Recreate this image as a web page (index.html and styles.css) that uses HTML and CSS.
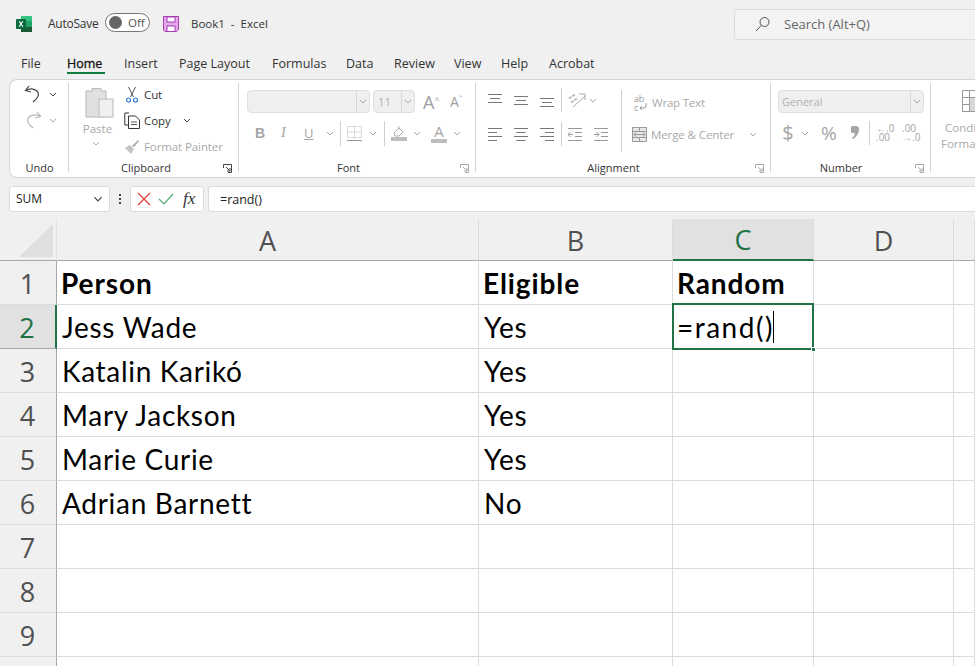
FILE: index.html
```html
<!DOCTYPE html>
<html lang="en">
<head>
<meta charset="utf-8">
<title>Book1 - Excel</title>
<link rel="stylesheet" href="styles.css">
</head>
<body>
<svg class="defs" width="0" height="0">
  <symbol id="chev" viewBox="0 0 8 5"><path d="M1 1l3 3 3-3" fill="none" stroke="currentColor" stroke-width="1"/></symbol>
  <symbol id="launch" viewBox="0 0 9 9"><path d="M.5 4V.5h8v8H5M3 3l4 4M7 4v3H4" fill="none" stroke="currentColor"/></symbol>
</svg>

<header class="titlebar">
  <svg class="xl" width="16" height="16" viewBox="0 0 16 16"><rect x="5" width="11" height="16" rx="1" fill="#107c41"/><rect x="5" width="11" height="5" fill="#33c481"/><rect x="10" y="5" width="6" height="6" fill="#21a366"/><rect x="5" y="11" width="11" height="5" fill="#185c37"/><rect y="3" width="10" height="10" rx="1" fill="#0b6a3b"/><path d="M2.6 5.2h1.3l1.1 1.9 1.1-1.9h1.3L5.7 8l1.8 2.8H6.200L5 8.800 3.800 10.800H2.500L4.300 8z" fill="#fff"/></svg>
  <span class="autosave">AutoSave</span>
  <span class="toggle"><i class="knob"></i><b>Off</b></span>
  <svg class="save" width="16" height="16" viewBox="0 0 16 16"><path d="M.5.500h15v13l-2 2H2l-1.500-1.500z" fill="#e3a9e8" stroke="#a63bb4"/><rect x="4" y="1" width="8" height="5" fill="#fff" stroke="#a63bb4"/><rect x="4" y="10" width="8" height="5.500" fill="#fff" stroke="#a63bb4"/></svg>
  <span class="doc">Book1&nbsp; -&nbsp; Excel</span>
  <div class="search">
    <svg width="16" height="16" viewBox="0 0 16 16"><circle cx="9.500" cy="6" r="4.500" fill="none" stroke="#555"/><path d="M6.300 9.300L1 15" stroke="#555" fill="none"/></svg>
    <span>Search (Alt+Q)</span>
  </div>
</header>

<nav class="tabs">
  <a class="t-file">File</a>
  <a class="t-home active">Home</a>
  <a class="t-insert">Insert</a>
  <a class="t-layout">Page Layout</a>
  <a class="t-formulas">Formulas</a>
  <a class="t-data">Data</a>
  <a class="t-review">Review</a>
  <a class="t-view">View</a>
  <a class="t-help">Help</a>
  <a class="t-acrobat">Acrobat</a>
</nav>

<section class="ribbon">
  <div class="group g-undo">
    <div class="body undo-body">
      <div class="irow">
        <svg class="ic-undo" width="18" height="18" viewBox="0 0 18 18"><path d="M5 1L1.500 5.500 7 7M2 5.500c4-2.500 10-2 12 2 1.500 3.500-1 6-5 9.500" fill="none" stroke="#444" stroke-width="1.200"/></svg>
        <svg class="chev dark" width="8" height="5"><use href="#chev"/></svg>
      </div>
      <div class="irow">
        <svg class="ic-undo" width="18" height="18" viewBox="0 0 18 18"><path d="M13 1l3.500 4.500L11 7M16 5.500c-4-2.500-10-2-12 2-1.500 3.500 1 6 5 9.500" fill="none" stroke="#b4b4b4" stroke-width="1.200"/></svg>
        <svg class="chev" width="8" height="5"><use href="#chev"/></svg>
      </div>
    </div>
    <div class="label">Undo</div>
  </div>

  <div class="group g-clip">
    <div class="body clip-body">
      <div class="paste">
        <svg width="29" height="31" viewBox="0 0 29 31"><path d="M1 4h6V1.500h9V4h5v26H1z" fill="#e0e0e0" stroke="#b9b9b9"/><rect x="14" y="12" width="14" height="18" fill="#f0f0f0" stroke="#b9b9b9"/></svg>
        <span class="muted">Paste</span>
        <svg class="chev" width="8" height="5"><use href="#chev"/></svg>
      </div>
      <div class="clip-list">
        <div class="clip-row">
          <svg class="clip-ic" width="16" height="17" viewBox="0 0 16 17"><path d="M4.500 1l5 10M11.500 1l-5 10" stroke="#555" fill="none"/><circle cx="4.500" cy="14" r="2" fill="none" stroke="#2b7cd3" stroke-width="1.200"/><circle cx="11.500" cy="14" r="2" fill="none" stroke="#2b7cd3" stroke-width="1.200"/></svg>
          <span>Cut</span>
        </div>
        <div class="clip-row">
          <svg class="clip-ic" width="16" height="17" viewBox="0 0 16 17"><path d="M5 1H.8v12H4" fill="none" stroke="#333"/><path d="M4.500 4h7l4 4v8.500h-11z" fill="#fff" stroke="#333"/><path d="M7 10h6M7 12.500h6" stroke="#555"/></svg>
          <span>Copy</span>
          <svg class="chev dark copy-chev" width="8" height="5"><use href="#chev"/></svg>
        </div>
        <div class="clip-row">
          <svg class="clip-ic" width="16" height="16" viewBox="0 0 16 16"><path d="M1 9l5-3 4 4-3 5z" fill="#c4c4c4"/><path d="M8 7l6-6 1 1-5 6z" fill="#a8a8a8"/></svg>
          <span class="muted">Format Painter</span>
        </div>
      </div>
    </div>
    <div class="label">Clipboard</div>
    <svg class="launch dark" width="9" height="9"><use href="#launch"/></svg>
  </div>

  <div class="group g-font">
    <div class="body font-body">
      <div class="cbrow">
        <div class="combo c-name"><span></span><i><svg class="chev" width="8" height="5"><use href="#chev"/></svg></i></div>
        <div class="combo c-size"><span>11</span><i><svg class="chev" width="8" height="5"><use href="#chev"/></svg></i></div>
        <span class="grow-a big">A<small>^</small></span>
        <span class="grow-a small">A<small>ˇ</small></span>
      </div>
      <div class="fmt-row">
        <b class="f-b">B</b>
        <i class="f-i">I</i>
        <u class="f-u">U</u>
        <svg class="chev c1" width="8" height="5"><use href="#chev"/></svg>
        <span class="sep s1"></span>
        <svg class="f-border" width="15" height="15" viewBox="0 0 15 15"><path d="M.5.500h14v11H.5zM7.500.500v11M.5 6h14" fill="none" stroke="#b4b4b4" stroke-dasharray="1 1"/><path d="M0 14.500h15" stroke="#999"/></svg>
        <svg class="chev c2" width="8" height="5"><use href="#chev"/></svg>
        <span class="sep s2"></span>
        <svg class="f-fill" width="16" height="16" viewBox="0 0 16 16"><path d="M3 8l5-5 4 4-4 4H4z" fill="#fff" stroke="#aaa"/><path d="M7 1l2 3" stroke="#aaa"/><rect y="12" width="16" height="4" fill="#bdbdbd"/></svg>
        <svg class="chev c3" width="8" height="5"><use href="#chev"/></svg>
        <span class="f-color">A</span>
        <svg class="chev c4" width="8" height="5"><use href="#chev"/></svg>
      </div>
    </div>
    <div class="label">Font</div>
    <svg class="launch" width="9" height="9"><use href="#launch"/></svg>
  </div>

  <div class="group g-align">
    <div class="body align-body">
      <div class="align-grid">
        <div class="a-row">
          <svg class="a-ic" width="14" height="14" viewBox="0 0 14 14"><path d="M0 1.500h14M2 5.500h10M0 9.500h14" stroke="#777"/></svg>
          <svg class="a-ic" width="14" height="14" viewBox="0 0 14 14"><path d="M0 3.500h14M2 7.500h10M0 11.500h14" stroke="#777" /></svg>
          <svg class="a-ic" width="14" height="14" viewBox="0 0 14 14"><path d="M0 5.500h14M2 9.500h10M0 13.500h14" stroke="#777"/></svg>
          <span class="vsep"></span>
          <svg class="a-orient" width="18" height="16" viewBox="0 0 18 16"><path d="M5 15L17 4M11 2h6v6" fill="none" stroke="#aaa"/><path d="M1 6.500l6-4M3 10.500l6-4" fill="none" stroke="#bbb" stroke-width="2" stroke-dasharray="3 1"/></svg>
          <svg class="chev" width="8" height="5"><use href="#chev"/></svg>
        </div>
        <div class="a-row">
          <svg class="a-ic" width="14" height="14" viewBox="0 0 14 14"><path d="M0 1.500h14M0 5.500h9M0 9.500h14M0 13.500h9" stroke="#777"/></svg>
          <svg class="a-ic" width="14" height="14" viewBox="0 0 14 14"><path d="M0 1.500h14M2.500 5.500h9M0 9.500h14M2.500 13.500h9" stroke="#777"/></svg>
          <svg class="a-ic" width="14" height="14" viewBox="0 0 14 14"><path d="M0 1.500h14M5 5.500h9M0 9.500h14M5 13.500h9" stroke="#777"/></svg>
          <span class="vsep"></span>
          <svg class="a-ind" width="14" height="14" viewBox="0 0 14 14"><path d="M0 1.500h14M7 5.500h7M7 9.500h7M0 13.500h14M5 7.500H0M2.500 5L0 7.500 2.500 10" fill="none" stroke="#999"/></svg>
          <svg class="a-ind" width="14" height="14" viewBox="0 0 14 14"><path d="M0 1.500h14M7 5.500h7M7 9.500h7M0 13.500h14M0 7.500h5M2.500 5L5 7.500 2.500 10" fill="none" stroke="#999"/></svg>
        </div>
      </div>
      <span class="tall-sep"></span>
      <div class="wrap-col">
        <div class="wrap-row w1">
          <span class="abc"><em>ab</em><em class="abc-c">c<svg width="8" height="8" viewBox="0 0 8 8"><path d="M7 0v3q0 2-2 2H1M3 3L1 5l2 2" fill="none" stroke="#999"/></svg></em></span>
          <span class="muted">Wrap Text</span>
        </div>
        <div class="wrap-row w2">
          <svg width="15" height="15" viewBox="0 0 15 15"><path d="M.5.500h14v14H.5zM.5 4.500h14M.5 10.500h14M7.500.500v4M7.500 10.500v4" fill="#e8e8e8" stroke="#999"/><path d="M2 7.500h11M4 5.500l-2 2 2 2M11 5.500l2 2-2 2" fill="none" stroke="#999"/></svg>
          <span class="muted">Merge &amp; Center</span>
          <svg class="chev merge-chev" width="8" height="5"><use href="#chev"/></svg>
        </div>
      </div>
    </div>
    <div class="label">Alignment</div>
    <svg class="launch" width="9" height="9"><use href="#launch"/></svg>
  </div>

  <div class="group g-num">
    <div class="body num-body">
      <div class="combo c-num"><span>General</span><i><svg class="chev" width="8" height="5"><use href="#chev"/></svg></i></div>
      <div class="num-row">
        <span class="n-dollar">$</span>
        <svg class="chev n-chev" width="8" height="5"><use href="#chev"/></svg>
        <span class="n-pct">%</span>
        <svg class="n-comma" width="8" height="14" viewBox="0 0 8 14"><path d="M2 0h3a3 3 0 0 1 3 3c0 5-3 8-6 10l-1-1c2-2 3-3 3-5H2a3.500 3.500 0 0 1 0-7z" fill="#a5a5a5"/></svg>
        <span class="sep n-sep"></span>
        <span class="n-dec"><em>←.0</em><em>.00</em></span>
        <span class="n-dec"><em>.00</em><em>→.0</em></span>
      </div>
    </div>
    <div class="label">Number</div>
    <svg class="launch" width="9" height="9"><use href="#launch"/></svg>
  </div>

  <div class="group g-cond">
    <svg class="cond-ic" width="22" height="22" viewBox="0 0 22 22"><path d="M.5.500h21v21H.5zM.5 7.500h21M.5 14.500h21M7.500.500v21" fill="#fff" stroke="#999"/><rect x="8" y="8" width="13" height="13" fill="#d8d8d8"/></svg>
    <span class="muted cond-a">Conditional</span>
    <span class="muted cond-b">Formatting</span>
  </div>
</section>

<div class="fbar">
  <div class="namebox"><span>SUM</span><svg class="chev dark" width="10" height="6"><use href="#chev"/></svg></div>
  <div class="dots"><i></i><i></i><i></i></div>
  <div class="fbtns">
    <svg width="14" height="14" viewBox="0 0 14 14"><path d="M1 1l12 12M13 1L1 13" stroke="#e03c31" stroke-width="1.200" fill="none"/></svg>
    <svg width="16" height="14" viewBox="0 0 16 14"><path d="M1 7l5 5L15 2" stroke="#4caf6e" stroke-width="1.200" fill="none"/></svg>
    <em class="fx">fx</em>
  </div>
  <div class="finput">=rand()</div>
</div>

<main class="sheet">
  <div class="corner"><span class="tri"></span></div>
  <div class="ch">A</div><div class="ch">B</div><div class="ch sel">C</div><div class="ch">D</div><div class="ch"></div>

  <div class="rh">1</div><div class="cell bold">Person</div><div class="cell bold">Eligible</div><div class="cell bold">Random</div><div class="cell"></div><div class="cell"></div>
  <div class="rh sel">2</div><div class="cell">Jess Wade</div><div class="cell">Yes</div><div class="cell active">=rand()<span class="caret"></span><span class="selbox"></span><span class="handle"></span></div><div class="cell"></div><div class="cell"></div>
  <div class="rh">3</div><div class="cell">Katalin Karikó</div><div class="cell">Yes</div><div class="cell"></div><div class="cell"></div><div class="cell"></div>
  <div class="rh">4</div><div class="cell">Mary Jackson</div><div class="cell">Yes</div><div class="cell"></div><div class="cell"></div><div class="cell"></div>
  <div class="rh">5</div><div class="cell">Marie Curie</div><div class="cell">Yes</div><div class="cell"></div><div class="cell"></div><div class="cell"></div>
  <div class="rh">6</div><div class="cell">Adrian Barnett</div><div class="cell">No</div><div class="cell"></div><div class="cell"></div><div class="cell"></div>
  <div class="rh">7</div><div class="cell"></div><div class="cell"></div><div class="cell"></div><div class="cell"></div><div class="cell"></div>
  <div class="rh">8</div><div class="cell"></div><div class="cell"></div><div class="cell"></div><div class="cell"></div><div class="cell"></div>
  <div class="rh">9</div><div class="cell"></div><div class="cell"></div><div class="cell"></div><div class="cell"></div><div class="cell"></div>
  <div class="rh"></div><div class="cell"></div><div class="cell"></div><div class="cell"></div><div class="cell"></div><div class="cell"></div>
</main>
</body>
</html>
```

FILE: styles.css
```css
* { box-sizing: border-box; }
html, body { margin: 0; height: 100%; }
body {
  width: 975px; height: 666px; overflow: hidden;
  background: #f0f0f0; color: #333;
  font: 12px/16px "Open Sans", "Noto Sans", sans-serif;
}
.defs { display: block; height: 0; }
svg { display: block; flex: none; }
.chev { color: #a8a8a8; }
.chev.dark, .launch.dark { color: #444; }
.muted { color: #a9a9a9; }

/* title bar */
.titlebar { height: 47px; display: flex; align-items: center; padding: 0 0 0 16px; }
.xl { margin-top: 1px; }
.autosave { margin-left: 16px; font-size: 12px; letter-spacing: -.25px; width: 57px; }
.toggle { width: 45px; height: 19px; border: 1px solid #777; border-radius: 10px; display: flex; align-items: center; padding-left: 3px; margin-right: 13px; background: #fff; margin-top: -2px; }
.knob { width: 13px; height: 13px; border-radius: 50%; background: #666; }
.toggle b { font-weight: 400; font-size: 11.500px; margin-left: 6px; color: #555; }
.doc { margin-left: 12px; font-size: 11.500px; color: #333; }
.search { margin-left: auto; margin-top: 1px; width: 241px; height: 31px; border: 1px solid #dcdcdc; border-right: 0; border-radius: 4px 0 0 4px; background: #f3f3f3; display: flex; align-items: center; gap: 13px; padding-left: 20px; color: #666; font-size: 13px; }

/* tabs */
.tabs { height: 32px; display: flex; padding-left: 21px; font-size: 12.500px; color: #333; }
.tabs a { display: block; height: 27px; padding-top: 9px; }
.t-file { width: 46px; } .t-home { width: 57px; } .t-insert { width: 55px; } .t-layout { width: 93px; }
.t-formulas { width: 74px; } .t-data { width: 48px; } .t-review { width: 60px; } .t-view { width: 47px; } .t-help { width: 48px; }
.tabs .active { color: #111; -webkit-text-stroke: .3px #111; position: relative; }
.tabs .active::after { content: ""; position: absolute; left: 0; top: 25px; width: 38px; height: 2px; background: #107c41; }

/* ribbon */
.ribbon { height: 99px; margin-left: 9px; background: #fff; border: 1px solid #d4d4d4; border-right: 0; border-radius: 8px 0 0 8px; display: flex; overflow: hidden; }
.group { position: relative; height: 97px; padding-top: 4px; display: flex; flex-direction: column; flex: none; }
.group::after { content: ""; position: absolute; right: 0; top: 3px; bottom: 5px; width: 1px; background: #d4d4d4; }
.body { flex: 1; display: flex; min-height: 0; }
.label { text-align: center; font-size: 11px; line-height: 14px; margin-bottom: 2px; color: #333; }
.launch { position: absolute; right: 7px; bottom: 4px; color: #aaa; }
.g-undo { width: 59px; } .g-clip { width: 170px; } .g-font { width: 237px; } .g-align { width: 295px; } .g-num { width: 160px; }
.g-clip .label { padding-right: 16px; } .g-font .label { padding-right: 18px; } .g-align .label { padding-right: 20px; } .g-num .label { padding-right: 20px; }
.g-cond { width: 60px; }
.g-cond::after { display: none; }

.undo-body { flex-direction: column; padding: 1px 0 0 14px; gap: 8px; }
.irow { display: flex; align-items: center; gap: 7px; }

.clip-body { padding-left: 15px; }
.paste { width: 31px; display: flex; flex-direction: column; align-items: center; padding-top: 3px; gap: 3px; font-size: 11.500px; }
.paste span { margin-left: -4px; }
.paste svg:last-child { margin: 1px 0 0 -7px; }
.clip-list { margin-left: 9px; display: flex; flex-direction: column; padding-top: 2px; gap: 9px; }
.clip-row { display: flex; align-items: center; gap: 4px; height: 17px; font-size: 11.500px; white-space: nowrap; letter-spacing: -.1px; }
.copy-chev { margin-left: 8px; }

.font-body { flex-direction: column; padding: 6px 0 0 8px; }
.cbrow { display: flex; align-items: center; }
.combo { height: 23px; background: #efefef; border: 1px solid #dfdfdf; border-radius: 4px; display: flex; align-items: center; justify-content: space-between; color: #b0b0b0; font-size: 11.500px; padding-left: 3px; }
.combo i { width: 13px; height: 100%; border-left: 1px solid #d8d8d8; display: flex; align-items: center; justify-content: center; }
.c-name { width: 123px; margin-right: 3px; }
.c-size { width: 42px; margin-right: 8px; padding-left: 4px; }
.grow-a { color: #a0a0a0; display: flex; line-height: 16px; }
.grow-a small { font-size: 9px; line-height: 12px; }
.big { font-size: 18px; width: 27px; }
.small { font-size: 14px; }

.fmt-row { height: 22px; margin-top: 9px; display: flex; align-items: center; color: #a5a5a5; font-size: 13px; padding-left: 8px; }
.f-b { width: 23px; font-family: "Liberation Sans", sans-serif; font-size: 14px; }
.f-i { width: 26px; padding-left: 3px; font-family: "Liberation Serif", serif; font-size: 14px; }
.f-u { width: 15px; font-size: 13px; }
.c1 { margin-left: 7px; }
.sep { width: 1px; height: 25px; background: #cfcfcf; }
.s1 { margin: 0 6px 0 6px; }
.f-border { margin-right: 7px; }
.s2 { margin: 0 6px 0 7px; }
.c3 { margin: 0 10px 0 6px; }
.f-color { width: 16px; height: 19px; text-align: center; font-size: 15px; line-height: 15px; border-bottom: 4px solid #bdbdbd; margin-right: 6px; }

.align-body { padding-left: 12px; }
.align-grid { width: 133px; display: flex; flex-direction: column; gap: 10px; padding-top: 4px; }
.a-row { display: flex; align-items: center; height: 24px; }
.a-ic { margin-right: 12px; }
.vsep { width: 1px; height: 24px; background: #cfcfcf; margin: 0 6px 0 -5px; }
.a-orient { margin-right: 3px; }
.a-ind { margin-right: 12px; }
.abc { width: 15px; display: flex; flex-direction: column; font-size: 9px; line-height: 9px; color: #999; }
.abc em { font-style: normal; }
.abc-c { display: flex; align-items: center; gap: 1px; }
.tall-sep { width: 1px; height: 62px; margin-top: 6px; background: #cfcfcf; }
.wrap-col { margin-left: 10px; display: flex; flex-direction: column; padding-top: 10px; font-size: 11.500px; white-space: nowrap; letter-spacing: -.1px; }
.wrap-row { display: flex; align-items: center; height: 17px; gap: 5px; }
.w1 { margin-left: 2px; gap: 3px; letter-spacing: -.2px; }
.w2 { margin-top: 15px; gap: 4px; }
.merge-chev { margin-left: 11px; }

.num-body { flex-direction: column; padding: 6px 0 0 7px; }
.c-num { width: 146px; padding-left: 3px; font-size: 11px; }
.num-row { height: 26px; margin-top: 7px; display: flex; align-items: center; color: #a5a5a5; padding-left: 3px; }
.n-dollar { font-size: 20px; width: 14px; text-align: center; }
.n-chev { margin-left: 6px; }
.n-pct { font-size: 19px; margin-left: 12px; width: 30px; }
.n-comma { margin-right: 10px; }
.n-sep { margin: 0 6px 0 0; height: 24px; }
.n-dec { display: flex; flex-direction: column; width: 26px; font-size: 10px; line-height: 9px; }
.n-dec em { font-style: normal; }

.g-cond { position: relative; }
.cond-ic { position: absolute; left: 31px; top: 10px; }
.cond-a, .cond-b { position: absolute; white-space: nowrap; font-size: 11.500px; }
.cond-a { left: 14px; top: 40px; }
.cond-b { left: 10px; top: 56px; }

/* formula bar */
.fbar { height: 26px; margin: 8px 0 0 9px; display: flex; }
.namebox, .fbtns, .finput { background: #fff; border: 1px solid #dcdcdc; border-radius: 3px; display: flex; align-items: center; }
.namebox { width: 101px; justify-content: space-between; padding: 0 6px; color: #222; font-size: 12px; }
.dots { width: 20px; display: flex; flex-direction: column; align-items: center; justify-content: center; gap: 2px; }
.dots i { width: 2px; height: 2px; background: #444; }
.fbtns { width: 74px; padding-left: 6px; gap: 7px; }
.fx { font: italic 17px/20px "Liberation Serif", serif; color: #333; margin-left: 2px; }
.finput { flex: 1; margin-left: 4px; border-right: 0; border-radius: 3px 0 0 3px; padding-left: 11px; padding-top: 1px; color: #222; font-size: 12.500px; }

/* sheet */
.sheet { margin-top: 7px; height: 447px; overflow: hidden; display: grid; grid-template-columns: 57px 422px 194px 141px 140px 21px; grid-auto-rows: 44px; grid-template-rows: 42px; font-family: Lato, "Open Sans", sans-serif; background: #fff; }
.corner, .ch, .rh { background: #f0f0f0; color: #505050; font-family: "Open Sans", sans-serif; font-weight: 400; display: flex; align-items: center; justify-content: center; font-size: 27px; }
.corner { border-bottom: 1px solid #a8a8a8; border-right: 1px solid #e4e4e4; padding: 5px 3px 3px 19px; }
.tri { width: 34px; height: 33px; background: #dfdfdf; clip-path: polygon(100% 0, 100% 100%, 0 100%); }
.ch { border-bottom: 1px solid #a8a8a8; border-right: 1px solid #dcdcdc; padding-top: 2px; }
.ch.sel { background: #e1e1e1; color: #217346; border-bottom: 2px solid #217346; }
.rh { border-right: 1px solid #a8a8a8; border-bottom: 1px solid #dcdcdc; padding: 3px 1px 0 0; }
.rh.sel { background: #e1e1e1; color: #217346; border-right: 2px solid #217346; border-bottom-color: #aaa; }
.cell { border-right: 1px solid #dcdcdc; border-bottom: 1px solid #dcdcdc; color: #000; font-size: 28px; letter-spacing: .7px; line-height: 44px; padding: 0 0 0 5px; white-space: nowrap; }
.cell.bold { font-weight: 700; letter-spacing: .9px; padding-left: 4px; }
.cell.active { position: relative; padding-left: 4px; letter-spacing: 1.500px; }
.caret { position: absolute; left: 100px; top: 6px; width: 1px; height: 32px; background: #000; }
.selbox { position: absolute; left: -1px; top: -2px; right: -1px; bottom: -2px; border: 2px solid #217346; }
.handle { position: absolute; right: -3px; bottom: -4px; background: #217346; border: 1px solid #fff; box-sizing: content-box; width: 3px; height: 3px; }
```
